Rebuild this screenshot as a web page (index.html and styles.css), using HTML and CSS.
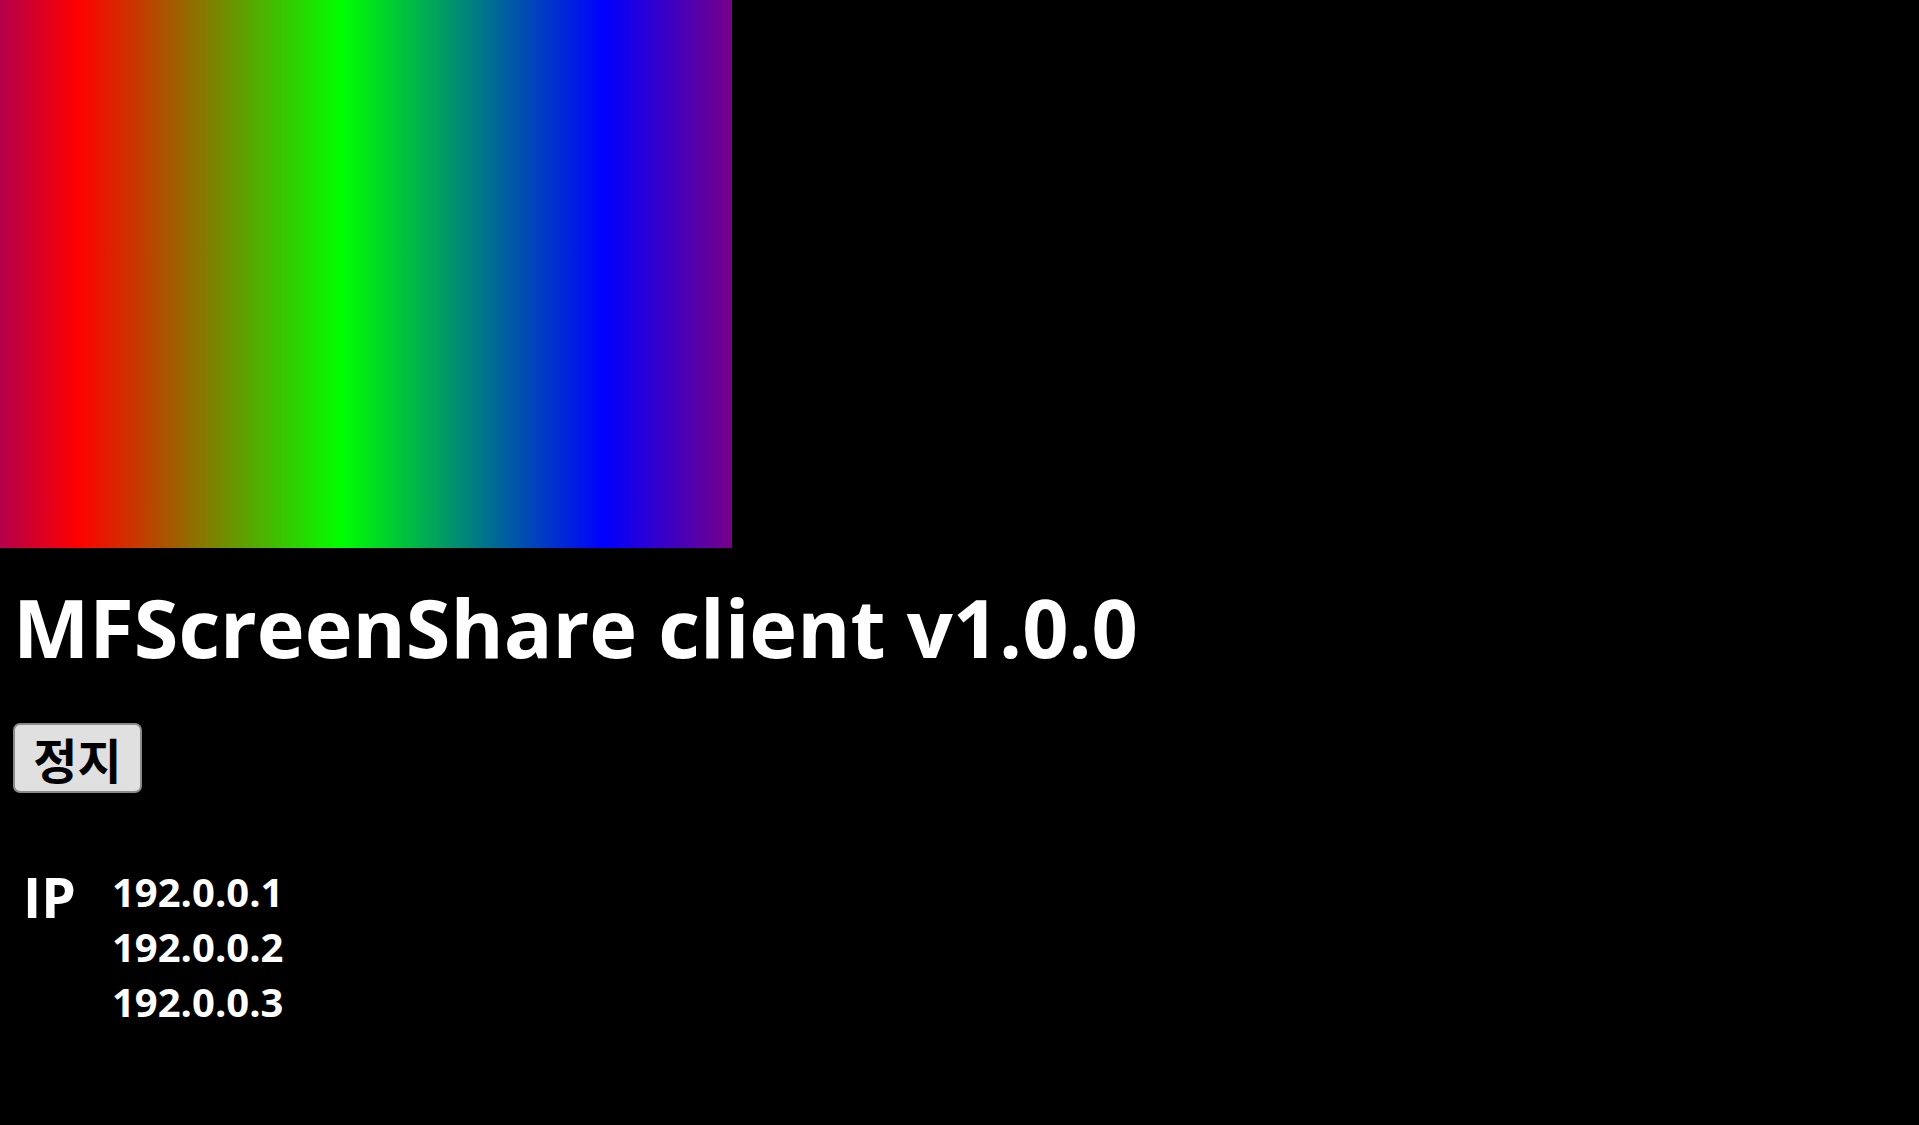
FILE: index.html
```html
<!DOCTYPE html>
<html lang="ko">
<head>
<meta charset="utf-8">
<title>MFScreenShare client</title>
<link rel="stylesheet" href="styles.css">
</head>
<body>
<div class="screen"></div>
<main class="content">
  <h1 class="title">MFScreenShare client v1.0.0</h1>
  <button class="stop-btn" type="button">정지</button>
  <div class="ip-block">
    <div class="ip-label">IP</div>
    <ul class="ip-list">
      <li>192.0.0.1</li>
      <li>192.0.0.2</li>
      <li>192.0.0.3</li>
    </ul>
  </div>
</main>
</body>
</html>
```
FILE: styles.css
```css
html, body {
  margin: 0;
  padding: 0;
  background: #000;
}
body {
  color: #fff;
  font-family: "Open Sans", "Noto Sans CJK KR", sans-serif;
}
.screen {
  width: 732px;
  height: 548px;
  background: linear-gradient(90deg,
    #b4004b 0px,
    #ff0000 78px,
    #00ff00 341px,
    #0000ff 604px,
    #800080 741px);
}
.content {
  display: flex;
  flex-direction: column;
  align-items: flex-start;
  padding-left: 13px;
}
.title {
  margin: 29px 0 0 0;
  font-size: 81px;
  font-weight: 700;
  line-height: 100px;
}
.stop-btn {
  margin-top: 46px;
  width: 129px;
  height: 70px;
  padding: 0;
  font-family: "Noto Sans CJK KR", sans-serif;
  font-size: 48px;
  font-weight: 700;
  color: #000;
  background: #e0e0e0;
  border: 2px solid #8a8a8a;
  border-radius: 7px;
  line-height: 1;
}
.ip-block {
  display: flex;
  margin-top: 71px;
  margin-left: 10px;
}
.ip-label {
  width: 89px;
  font-size: 55px;
  font-weight: 700;
  line-height: 66px;
}
.ip-list {
  list-style: none;
  margin: 0;
  padding: 0;
  font-size: 40px;
  font-weight: 700;
  line-height: 55px;
}
```
